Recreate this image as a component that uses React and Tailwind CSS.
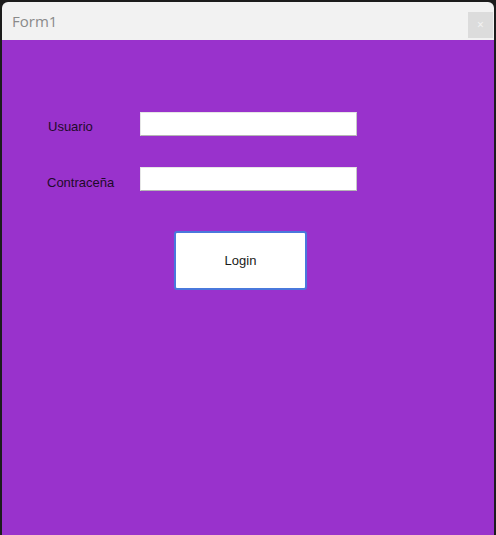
import React from 'react';

export default function App() {
  return (
    <div className="w-[496px] h-[535px] bg-[#1c1c1c] pt-[2px] px-[2px] overflow-hidden">
      <div className="flex flex-col h-full rounded-t-[6px] overflow-hidden">
        {/* Title bar */}
        <div className="h-[38px] bg-[#f2f2f2] flex items-center justify-between pl-[10px] pr-[1px]">
          <span className="text-[15px] text-[#8a8a8a]" style={{ fontFamily: '"Open Sans", "Noto Sans", sans-serif' }}>Form1</span>
          <div className="w-[25px] h-[26px] mt-[8px] bg-[#dcdcdc] flex items-center justify-center text-[12px] text-[#f2f2f2]">×</div>
        </div>

        {/* Form body */}
        <div className="flex-1 bg-[#9932cc] pt-[72px]" style={{ fontFamily: '"Liberation Sans", Arial, sans-serif' }}>
          <div className="flex items-center pl-[46px]">
            <span className="w-[92px] pt-[5px] text-[13px] text-[#1e0a2a]">Usuario</span>
            <div className="w-[217px] h-[24px] bg-white border border-[#e6e6e6] border-b-[#b5b5b5] border-r-[#c8c8c8]"></div>
          </div>
          <div className="flex items-center pl-[45px] mt-[30px]">
            <span className="w-[93px] pt-[6px] text-[13px] text-[#1e0a2a]">Contraceña</span>
            <div className="w-[217px] h-[24px] bg-white border border-[#e6e6e6] border-b-[#b5b5b5] border-r-[#c8c8c8]"></div>
          </div>
          <div className="pl-[172px] mt-[39px]">
            <div className="w-[133px] h-[59px] bg-white border-2 border-solid border-[#4a78dc] rounded-[3px] flex items-center justify-center text-[13px] text-[#1a1a1a]">
              Login
            </div>
          </div>
        </div>
      </div>
    </div>
  );
}
